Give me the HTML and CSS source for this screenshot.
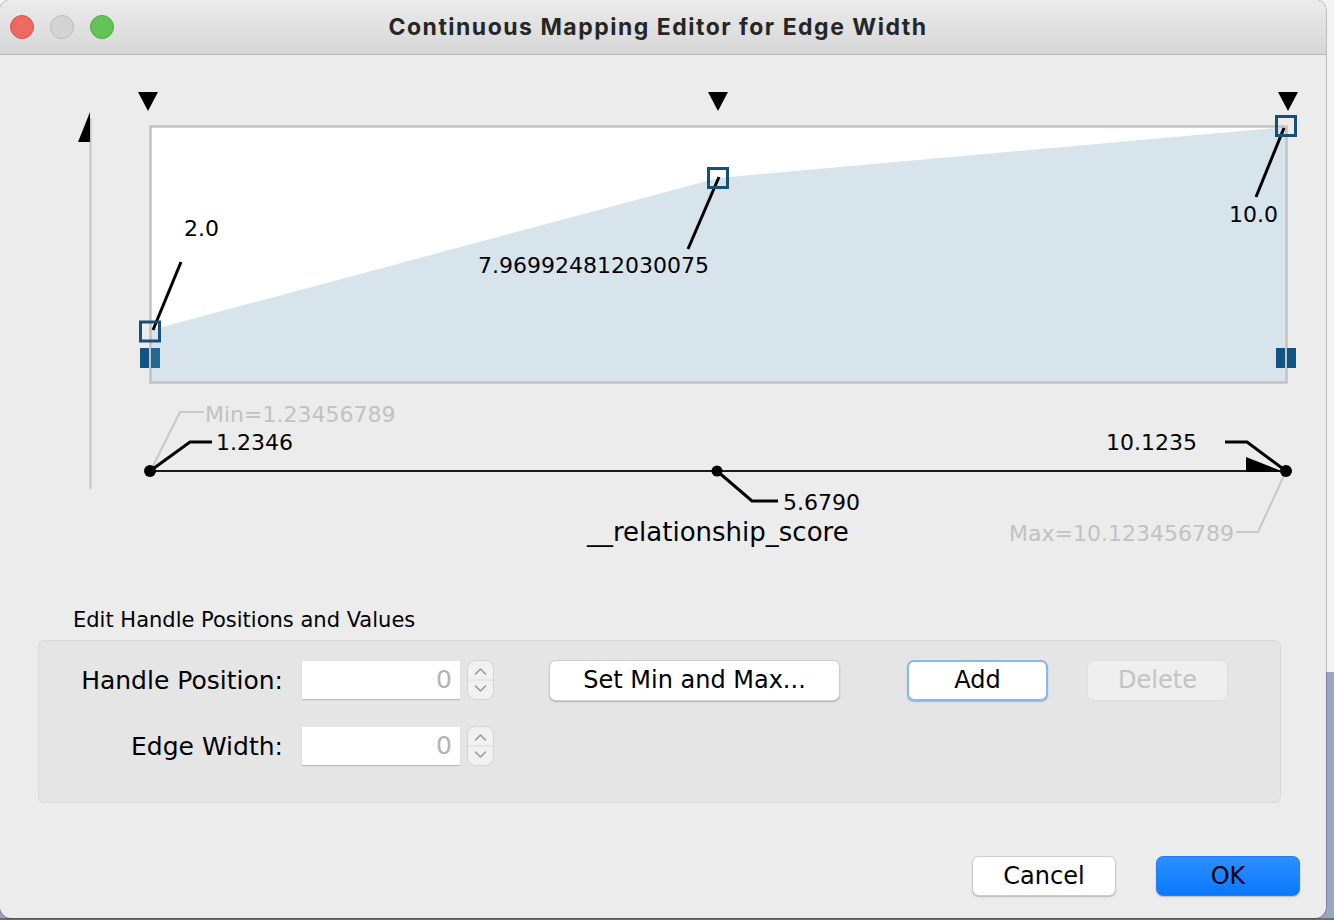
FILE: index.html
```html
<!DOCTYPE html>
<html>
<head>
<meta charset="utf-8">
<title>Continuous Mapping Editor for Edge Width</title>
<link rel="stylesheet" href="styles.css">
</head>
<body>
<div class="window">
  <div class="titlebar">
    <div class="lights">
      <span class="light light-close"></span>
      <span class="light light-min"></span>
      <span class="light light-max"></span>
    </div>
    <div class="title">Continuous Mapping Editor for Edge Width</div>
    <div class="title-spacer"></div>
  </div>

  <svg class="chart" width="1326" height="545" viewBox="0 55 1326 545" xmlns="http://www.w3.org/2000/svg">
    <!-- vertical axis -->
    <line x1="90.5" y1="118" x2="90.5" y2="489" stroke="#c4c4c4" stroke-width="2"/>
    <polygon points="90,112 78,142 90,142" fill="#000"/>

    <!-- top handle markers -->
    <polygon points="138,92 158,92 148,111" fill="#000"/>
    <polygon points="708,92 728,92 718,111" fill="#000"/>
    <polygon points="1278,92 1298,92 1288,111" fill="#000"/>

    <!-- plot area -->
    <rect x="150.5" y="126.5" width="1136" height="256" fill="#fff"/>
    <polygon points="151,330 718,178 1286,127 1286,382 151,382" fill="#d8e4ec"/>
    <rect x="150.5" y="126.5" width="1136" height="256" fill="none" stroke="#c2c2c2" stroke-width="2.5"/>

    <!-- leaders to values -->
    <line x1="153" y1="330" x2="181" y2="262" stroke="#000" stroke-width="3"/>
    <line x1="719" y1="177" x2="688" y2="249" stroke="#000" stroke-width="3"/>
    <line x1="1284" y1="128" x2="1256" y2="197" stroke="#000" stroke-width="3"/>

    <!-- handles -->
    <rect x="140.5" y="322" width="19" height="19" fill="none" stroke="#184f77" stroke-width="3"/>
    <rect x="708.5" y="168.5" width="19" height="19" fill="none" stroke="#184f77" stroke-width="3"/>
    <rect x="1276.5" y="116.5" width="19" height="19" fill="none" stroke="#184f77" stroke-width="3"/>

    <!-- range bars -->
    <rect x="140" y="348" width="9" height="20" fill="#0f5482"/>
    <rect x="151" y="348" width="9" height="20" fill="#246694"/>
    <rect x="1276" y="348" width="9" height="20" fill="#0f5482"/>
    <rect x="1287" y="348" width="9" height="20" fill="#0f5482"/>

    <g class="chart-text">
      <text x="184" y="236">2.0</text>
      <text x="478" y="273">7.969924812030075</text>
      <text x="1229" y="222">10.0</text>
    </g>

    <!-- bottom axis -->
    <polyline points="152,468 180,412 204,412" fill="none" stroke="#c8c8c8" stroke-width="2"/>
    <polyline points="1286,471 1258,532 1236,532" fill="none" stroke="#c8c8c8" stroke-width="2"/>
    <line x1="150" y1="471" x2="1286" y2="471" stroke="#1a1a1a" stroke-width="2"/>
    <polygon points="1246,457 1246,472 1284,472" fill="#000"/>
    <polyline points="150,471 190,442 212,442" fill="none" stroke="#000" stroke-width="3"/>
    <polyline points="1286,471 1247,442 1225,442" fill="none" stroke="#000" stroke-width="3"/>
    <polyline points="717,471 752,501 778,501" fill="none" stroke="#000" stroke-width="3"/>
    <circle cx="150" cy="471" r="6" fill="#000"/>
    <circle cx="717" cy="471" r="5.5" fill="#000"/>
    <circle cx="1286" cy="471" r="6" fill="#000"/>

    <g class="chart-text">
      <text class="muted" x="205" y="422">Min=1.23456789</text>
      <text x="216" y="450">1.2346</text>
      <text x="1106" y="450">10.1235</text>
      <text x="783" y="510">5.6790</text>
      <text class="muted" x="1234" y="541" text-anchor="end">Max=10.123456789</text>
      <text class="axis-name" x="587" y="541">__relationship_score</text>
    </g>
  </svg>

  <div class="section-title">Edit Handle Positions and Values</div>

  <div class="panel">
    <div class="row">
      <div class="label">Handle Position:</div>
      <div class="field">0</div>
      <div class="spinner">
        <svg width="27" height="40" viewBox="0 0 27 40" xmlns="http://www.w3.org/2000/svg">
          <rect x="0.5" y="0.5" width="26" height="39" rx="8" fill="#f1f1f1" stroke="#d3d3d3"/>
          <line x1="1" y1="20" x2="26" y2="20" stroke="#dadada"/>
          <polyline points="8.5,14 13.5,9 18.5,14" fill="none" stroke="#9a9a9a" stroke-width="1.6" stroke-linecap="round" stroke-linejoin="round"/>
          <polyline points="8.5,26 13.5,31 18.5,26" fill="none" stroke="#9a9a9a" stroke-width="1.6" stroke-linecap="round" stroke-linejoin="round"/>
        </svg>
      </div>
      <button class="btn btn-minmax">Set Min and Max...</button>
      <button class="btn btn-add">Add</button>
      <button class="btn btn-delete">Delete</button>
    </div>
    <div class="row">
      <div class="label">Edge Width:</div>
      <div class="field">0</div>
      <div class="spinner">
        <svg width="27" height="40" viewBox="0 0 27 40" xmlns="http://www.w3.org/2000/svg">
          <rect x="0.5" y="0.5" width="26" height="39" rx="8" fill="#f1f1f1" stroke="#d3d3d3"/>
          <line x1="1" y1="20" x2="26" y2="20" stroke="#dadada"/>
          <polyline points="8.5,14 13.5,9 18.5,14" fill="none" stroke="#9a9a9a" stroke-width="1.6" stroke-linecap="round" stroke-linejoin="round"/>
          <polyline points="8.5,26 13.5,31 18.5,26" fill="none" stroke="#9a9a9a" stroke-width="1.6" stroke-linecap="round" stroke-linejoin="round"/>
        </svg>
      </div>
    </div>
  </div>

  <div class="footer">
    <button class="btn btn-footer">Cancel</button>
    <button class="btn btn-footer btn-ok">OK</button>
  </div>
</div>
</body>
</html>
```

FILE: styles.css
```css
html, body {
  margin: 0;
  padding: 0;
}

body {
  width: 1334px;
  height: 920px;
  overflow: hidden;
  background: linear-gradient(to bottom, #f3f3f3 0, #f3f3f3 672px, #9ba5c6 672px, #9ba5c6 918px, #6d6d6d 918px);
  font-family: "DejaVu Sans", "Liberation Sans", sans-serif;
  color: #000;
}

.window {
  width: 1326px;
  height: 918px;
  background: #ececec;
  border-radius: 11px;
  overflow: hidden;
  box-shadow: 0 0 0 1px rgba(0, 0, 0, 0.22);
  display: flex;
  flex-direction: column;
}

.titlebar {
  height: 54px;
  flex: none;
  display: grid;
  grid-template-columns: 1fr auto 1fr;
  align-items: center;
  background: linear-gradient(to bottom, #ebebeb, #d7d7d7);
  border-bottom: 1px solid #b8b8b8;
}

.lights {
  display: flex;
  gap: 16px;
  padding-left: 10px;
}

.light {
  width: 22px;
  height: 22px;
  border-radius: 50%;
  display: block;
}

.light-close {
  background: #ee6a5e;
  border: 1px solid #d8544a;
}

.light-min {
  background: #d3d3d3;
  border: 1px solid #bcbcbc;
}

.light-max {
  background: #61c454;
  border: 1px solid #4ea93f;
}

.title {
  font-family: Inter, "Liberation Sans", sans-serif;
  font-weight: 700;
  font-size: 23px;
  color: #262626;
  letter-spacing: 1.5px;
  padding-right: 10px;
}

.chart {
  display: block;
  flex: none;
}

.chart-text text {
  font-family: "DejaVu Sans", sans-serif;
  font-size: 22px;
  fill: #000;
}

.chart-text text.muted {
  fill: #c2c2c2;
}

.chart-text text.axis-name {
  font-size: 26px;
}

.section-title {
  margin: 8px 0 8px 73px;
  font-size: 21px;
  line-height: 24px;
  height: 24px;
}

.panel {
  margin-left: 38px;
  width: 1241px;
  height: 143px;
  background: #e5e5e5;
  border: 1px solid #dadada;
  border-radius: 6px;
  padding-top: 18px;
  box-sizing: content-box;
  display: flex;
  flex-direction: column;
  gap: 24px;
}

.row {
  display: flex;
  align-items: center;
  height: 42px;
}

.label {
  width: 244px;
  text-align: right;
  font-size: 25px;
  flex: none;
}

.field {
  margin-left: 19px;
  width: 158px;
  height: 38px;
  background: #fff;
  box-shadow: 0 1px 1px rgba(0, 0, 0, 0.18);
  color: #b3b3b3;
  font-size: 25px;
  line-height: 38px;
  text-align: right;
  padding-right: 8px;
  box-sizing: border-box;
  flex: none;
}

.spinner {
  margin-left: 7px;
  width: 27px;
  height: 40px;
  flex: none;
}

.spinner svg {
  display: block;
}

.btn {
  font-family: "DejaVu Sans", "Liberation Sans", sans-serif;
  font-size: 24px;
  color: #000;
  background: #fff;
  border: 1px solid #cdcdcd;
  border-radius: 7px;
  box-shadow: 0 1px 1.5px rgba(0, 0, 0, 0.22);
  height: 41px;
  padding: 0;
  flex: none;
}

.btn-minmax {
  margin-left: 55px;
  width: 291px;
}

.btn-add {
  margin-left: 67px;
  width: 141px;
  border: 2px solid #8ab7ec;
}

.btn-delete {
  margin-left: 39px;
  width: 141px;
  background: #efefef;
  color: #c3c3c3;
  border-color: #dedede;
  box-shadow: none;
}

.footer {
  margin-top: 53px;
  display: flex;
  justify-content: flex-end;
  gap: 40px;
  padding-right: 26px;
}

.btn-footer {
  width: 144px;
  height: 40px;
}

.btn-ok {
  background: linear-gradient(to bottom, #2d8fff, #0a79fe);
  border-color: #1f7ff0;
}
```
